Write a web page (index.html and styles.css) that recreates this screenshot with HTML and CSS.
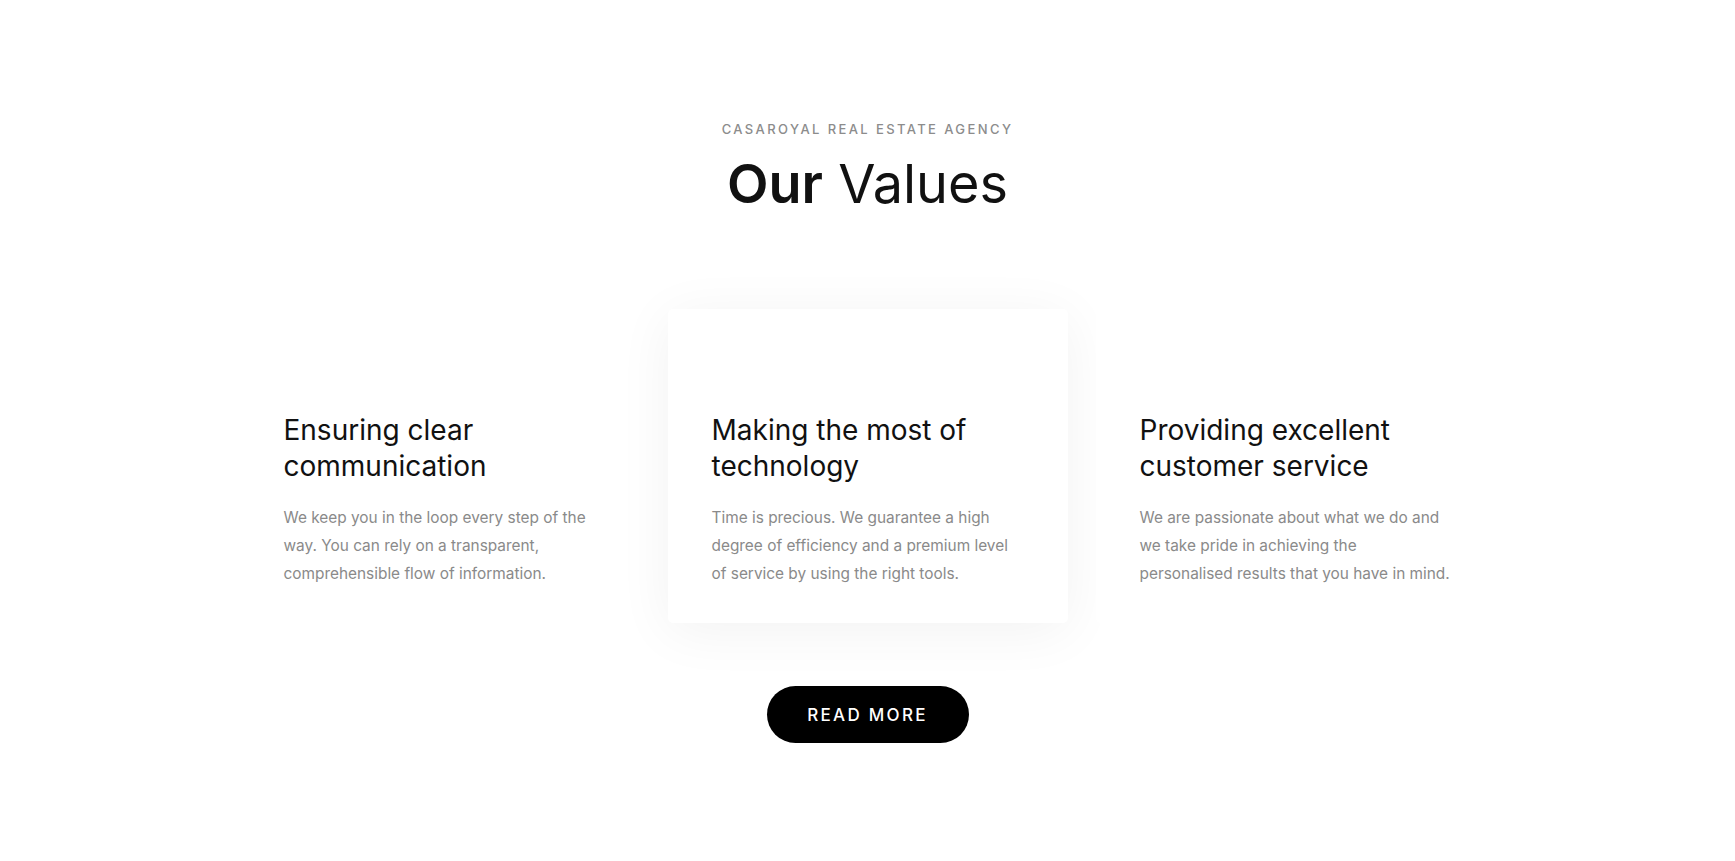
FILE: index.html
```html
<!DOCTYPE html>
<html lang="en">
<head>
<meta charset="utf-8">
<title>Our Values</title>
<link rel="stylesheet" href="styles.css">
</head>
<body>
<section class="values">
  <p class="eyebrow">CASAROYAL REAL ESTATE AGENCY</p>
  <h2 class="title"><strong>Our</strong> Values</h2>
  <div class="grid">
    <article class="card">
      <h3>Ensuring clear communication</h3>
      <p>We keep you in the loop every step of the way. You can rely on a transparent, comprehensible flow of information.</p>
    </article>
    <article class="card card--active">
      <h3>Making the most of technology</h3>
      <p>Time is precious. We guarantee a high degree of efficiency and a premium level of service by using the right tools.</p>
    </article>
    <article class="card">
      <h3>Providing excellent customer service</h3>
      <p>We are passionate about what we do and we take pride in achieving the personalised results that you have in mind.</p>
    </article>
  </div>
  <div class="actions">
    <a class="btn" href="#">READ MORE</a>
  </div>
</section>
</body>
</html>
```

FILE: styles.css
```css
* { box-sizing: border-box; }
html, body { margin: 0; padding: 0; background: #fff; }
body {
  font-family: "Inter", "Noto Sans", sans-serif;
  color: #111;
}
.values {
  padding-top: 119px;
  display: flex;
  flex-direction: column;
  align-items: center;
}
.eyebrow {
  margin: 0;
  font-size: 13px;
  line-height: 20px;
  font-weight: 500;
  letter-spacing: 2.4px;
  color: #8c8c8c;
}
.title {
  margin: 10px 0 0;
  font-size: 54px;
  line-height: 70px;
  font-weight: 400;
  color: #111;
}
.title strong { font-weight: 600; }
.grid {
  margin-top: 90px;
  display: grid;
  grid-template-columns: repeat(3, 400px);
  column-gap: 28px;
}
.card {
  padding: 103px 42px 35px 44px;
  border-radius: 5px;
  background: #fff;
}
.card--active {
  box-shadow: 0 8px 55px rgba(0, 0, 0, 0.055);
}
.card h3 {
  margin: 0;
  font-size: 28px;
  line-height: 36px;
  font-weight: 400;
  color: #111;
}
.card p {
  margin: 20px 0 0;
  font-size: 15.4px;
  line-height: 28px;
  color: #8a8a8a;
}
.actions { margin-top: 63px; }
.btn {
  display: inline-flex;
  align-items: center;
  justify-content: center;
  width: 202px;
  height: 57px;
  border-radius: 29px;
  background: #000;
  color: #fff;
  text-decoration: none;
  font-size: 17px;
  font-weight: 500;
  letter-spacing: 2.3px;
}
```
